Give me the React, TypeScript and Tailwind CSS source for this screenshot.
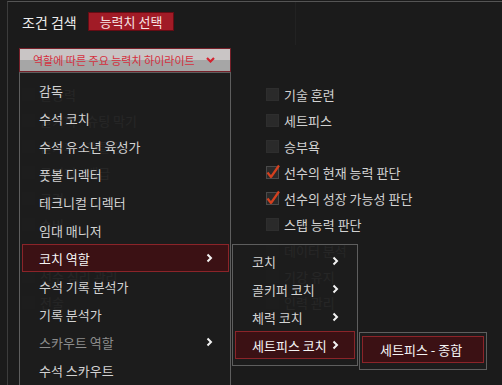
import React from 'react';

type MenuItem = { label: string; sub?: boolean; active?: boolean; dim?: boolean };

const roles: MenuItem[] = [
  { label: '감독' },
  { label: '수석 코치' },
  { label: '수석 유소년 육성가' },
  { label: '풋볼 디렉터' },
  { label: '테크니컬 디렉터' },
  { label: '임대 매니저' },
  { label: '코치 역할', sub: true, active: true },
  { label: '수석 기록 분석가' },
  { label: '기록 분석가' },
  { label: '스카우트 역할', sub: true, dim: true },
  { label: '수석 스카우트' },
];

const coachRoles: MenuItem[] = [
  { label: '코치', sub: true },
  { label: '골키퍼 코치', sub: true },
  { label: '체력 코치', sub: true },
  { label: '세트피스 코치', sub: true, active: true },
];

const leftAttrs = [
  '활동력',
  '골키퍼 - 슈팅 막기',
  '골키퍼 - 핸들링',
  '골키퍼 - 배급',
  '공격',
  '수비',
  '정신력',
  '선수 심리 관리',
  '전술',
];

const rightAttrs = [
  { label: '기술 훈련' },
  { label: '세트피스' },
  { label: '승부욕' },
  { label: '선수의 현재 능력 판단', checked: true },
  { label: '선수의 성장 가능성 판단', checked: true },
  { label: '스탭 능력 판단' },
  { label: '데이터 분석' },
  { label: '기강 유지' },
  { label: '인력 관리' },
];

const Chevron = () => (
  <svg width="7" height="10" viewBox="0 0 7 10" className="shrink-0">
    <polyline points="1.5,1.5 5,5 1.5,8.5" fill="none" stroke="#f2f2f2" strokeWidth="2" />
  </svg>
);

const CheckBox = ({ checked }: { checked?: boolean }) => (
  <div
    className={`w-[13px] h-[13px] shrink-0 bg-[#2a2a2a] border ${
      checked ? 'border-[#4a4a4a]' : 'border-[#2e2e2e]'
    } flex items-center justify-center overflow-visible`}
  >
    {checked && (
      <svg width="14" height="14" viewBox="0 0 14 14" className="overflow-visible">
        <path d="M1.5 7.5 L5 12 L13 0.5" fill="none" stroke="#d4401f" strokeWidth="2.2" strokeLinejoin="round" />
      </svg>
    )}
  </div>
);

const Row = ({ item, children }: { item: MenuItem; children?: React.ReactNode }) => (
  <div
    className={`relative h-[28px] flex items-center justify-between pl-[16px] pr-[15px] border ${
      item.active ? 'bg-[#3b1114] border-[#8b2429] text-[#f4f4f4]' : 'border-transparent'
    } ${item.dim ? 'text-[#8c8c8c]' : item.active ? '' : 'text-[#d2d2d2]'}`}
  >
    <span className="whitespace-nowrap">{item.label}</span>
    {item.sub && <Chevron />}
    {children}
  </div>
);

export default function App() {
  return (
    <div className="w-[502px] h-[385px] overflow-hidden bg-[#1b1b1b] pl-[7px] pt-[1px] font-['Noto_Sans_CJK_KR',sans-serif] text-[13px] leading-none">
      <div className="h-full border-t border-l border-t-[#555555] border-l-[#3c3c3c]">
        {/* header */}
        <div className="flex h-[43px]">
          <div className="w-[287px] flex items-start gap-[11px] pt-[10px] pl-[14px]">
            <div className="h-[19px] flex items-center text-[14px] text-[#ececec]">조건 검색</div>
            <div className="h-[19px] px-[11px] flex items-center bg-[#a11b26] border border-[#650c14] text-[#f6e4e4]">
              능력치 선택
            </div>
          </div>
          <div className="h-full border-l border-[#222222]" />
        </div>

        {/* dropdown */}
        <div className="relative ml-[11px] mt-[3px] w-[212px] z-10">
          <button className="w-full h-[24px] flex items-center justify-between pl-[13px] pr-[15px] border border-[#762029] bg-[linear-gradient(to_bottom,#c9c5c5_50%,#a6a6a6_50%)] text-[11px] text-[#d42f3e]">
            <span>역할에 따른 주요 능력치 하이라이트</span>
            <svg width="9" height="6" viewBox="0 0 9 6">
              <polyline points="1,1 4.5,4.5 8,1" fill="none" stroke="#d3222f" strokeWidth="2.2" />
            </svg>
          </button>

          <div className="absolute left-0 top-full w-[212px] h-[330px] border border-[#5e5e5e] bg-[rgba(28,28,28,0.95)] pt-[3px] pl-[2px] pr-[1px]">
            {roles.map((r) => (
              <Row key={r.label} item={r}>
                {r.active && (
                  <div className="absolute left-[209px] top-[-1px] w-[126px] border border-[#5e5e5e] bg-[rgba(28,28,28,0.95)] pt-[2px] pb-[6px] px-[2px]">
                    {coachRoles.map((c) => (
                      <Row key={c.label} item={c}>
                        {c.active && (
                          <div className="absolute left-[123px] top-0 w-[128px] border border-[#5e5e5e] bg-[rgba(28,28,28,0.95)] pt-[3px] pb-[6px] px-[2px]">
                            <div className="h-[27px] flex items-center pl-[17px] bg-[#3b1114] border border-[#8b2429] text-[#f4f4f4] whitespace-nowrap">
                              세트피스 - 종합
                            </div>
                          </div>
                        )}
                      </Row>
                    ))}
                  </div>
                )}
              </Row>
            ))}
          </div>
        </div>

        {/* attribute columns */}
        <div className="flex pl-[14px] pt-[9px]">
          <div className="w-[244px] flex flex-col">
            {leftAttrs.map((a) => (
              <div key={a} className="h-[26px] flex items-center gap-[5px]">
                <CheckBox />
                <span className="text-[#d2d2d2] whitespace-nowrap">{a}</span>
              </div>
            ))}
          </div>
          <div className="flex flex-col">
            {rightAttrs.map((a) => (
              <div key={a.label} className="h-[26px] flex items-center gap-[5px]">
                <CheckBox checked={a.checked} />
                <span className="text-[#d2d2d2] whitespace-nowrap">{a.label}</span>
              </div>
            ))}
          </div>
        </div>
      </div>
    </div>
  );
}
